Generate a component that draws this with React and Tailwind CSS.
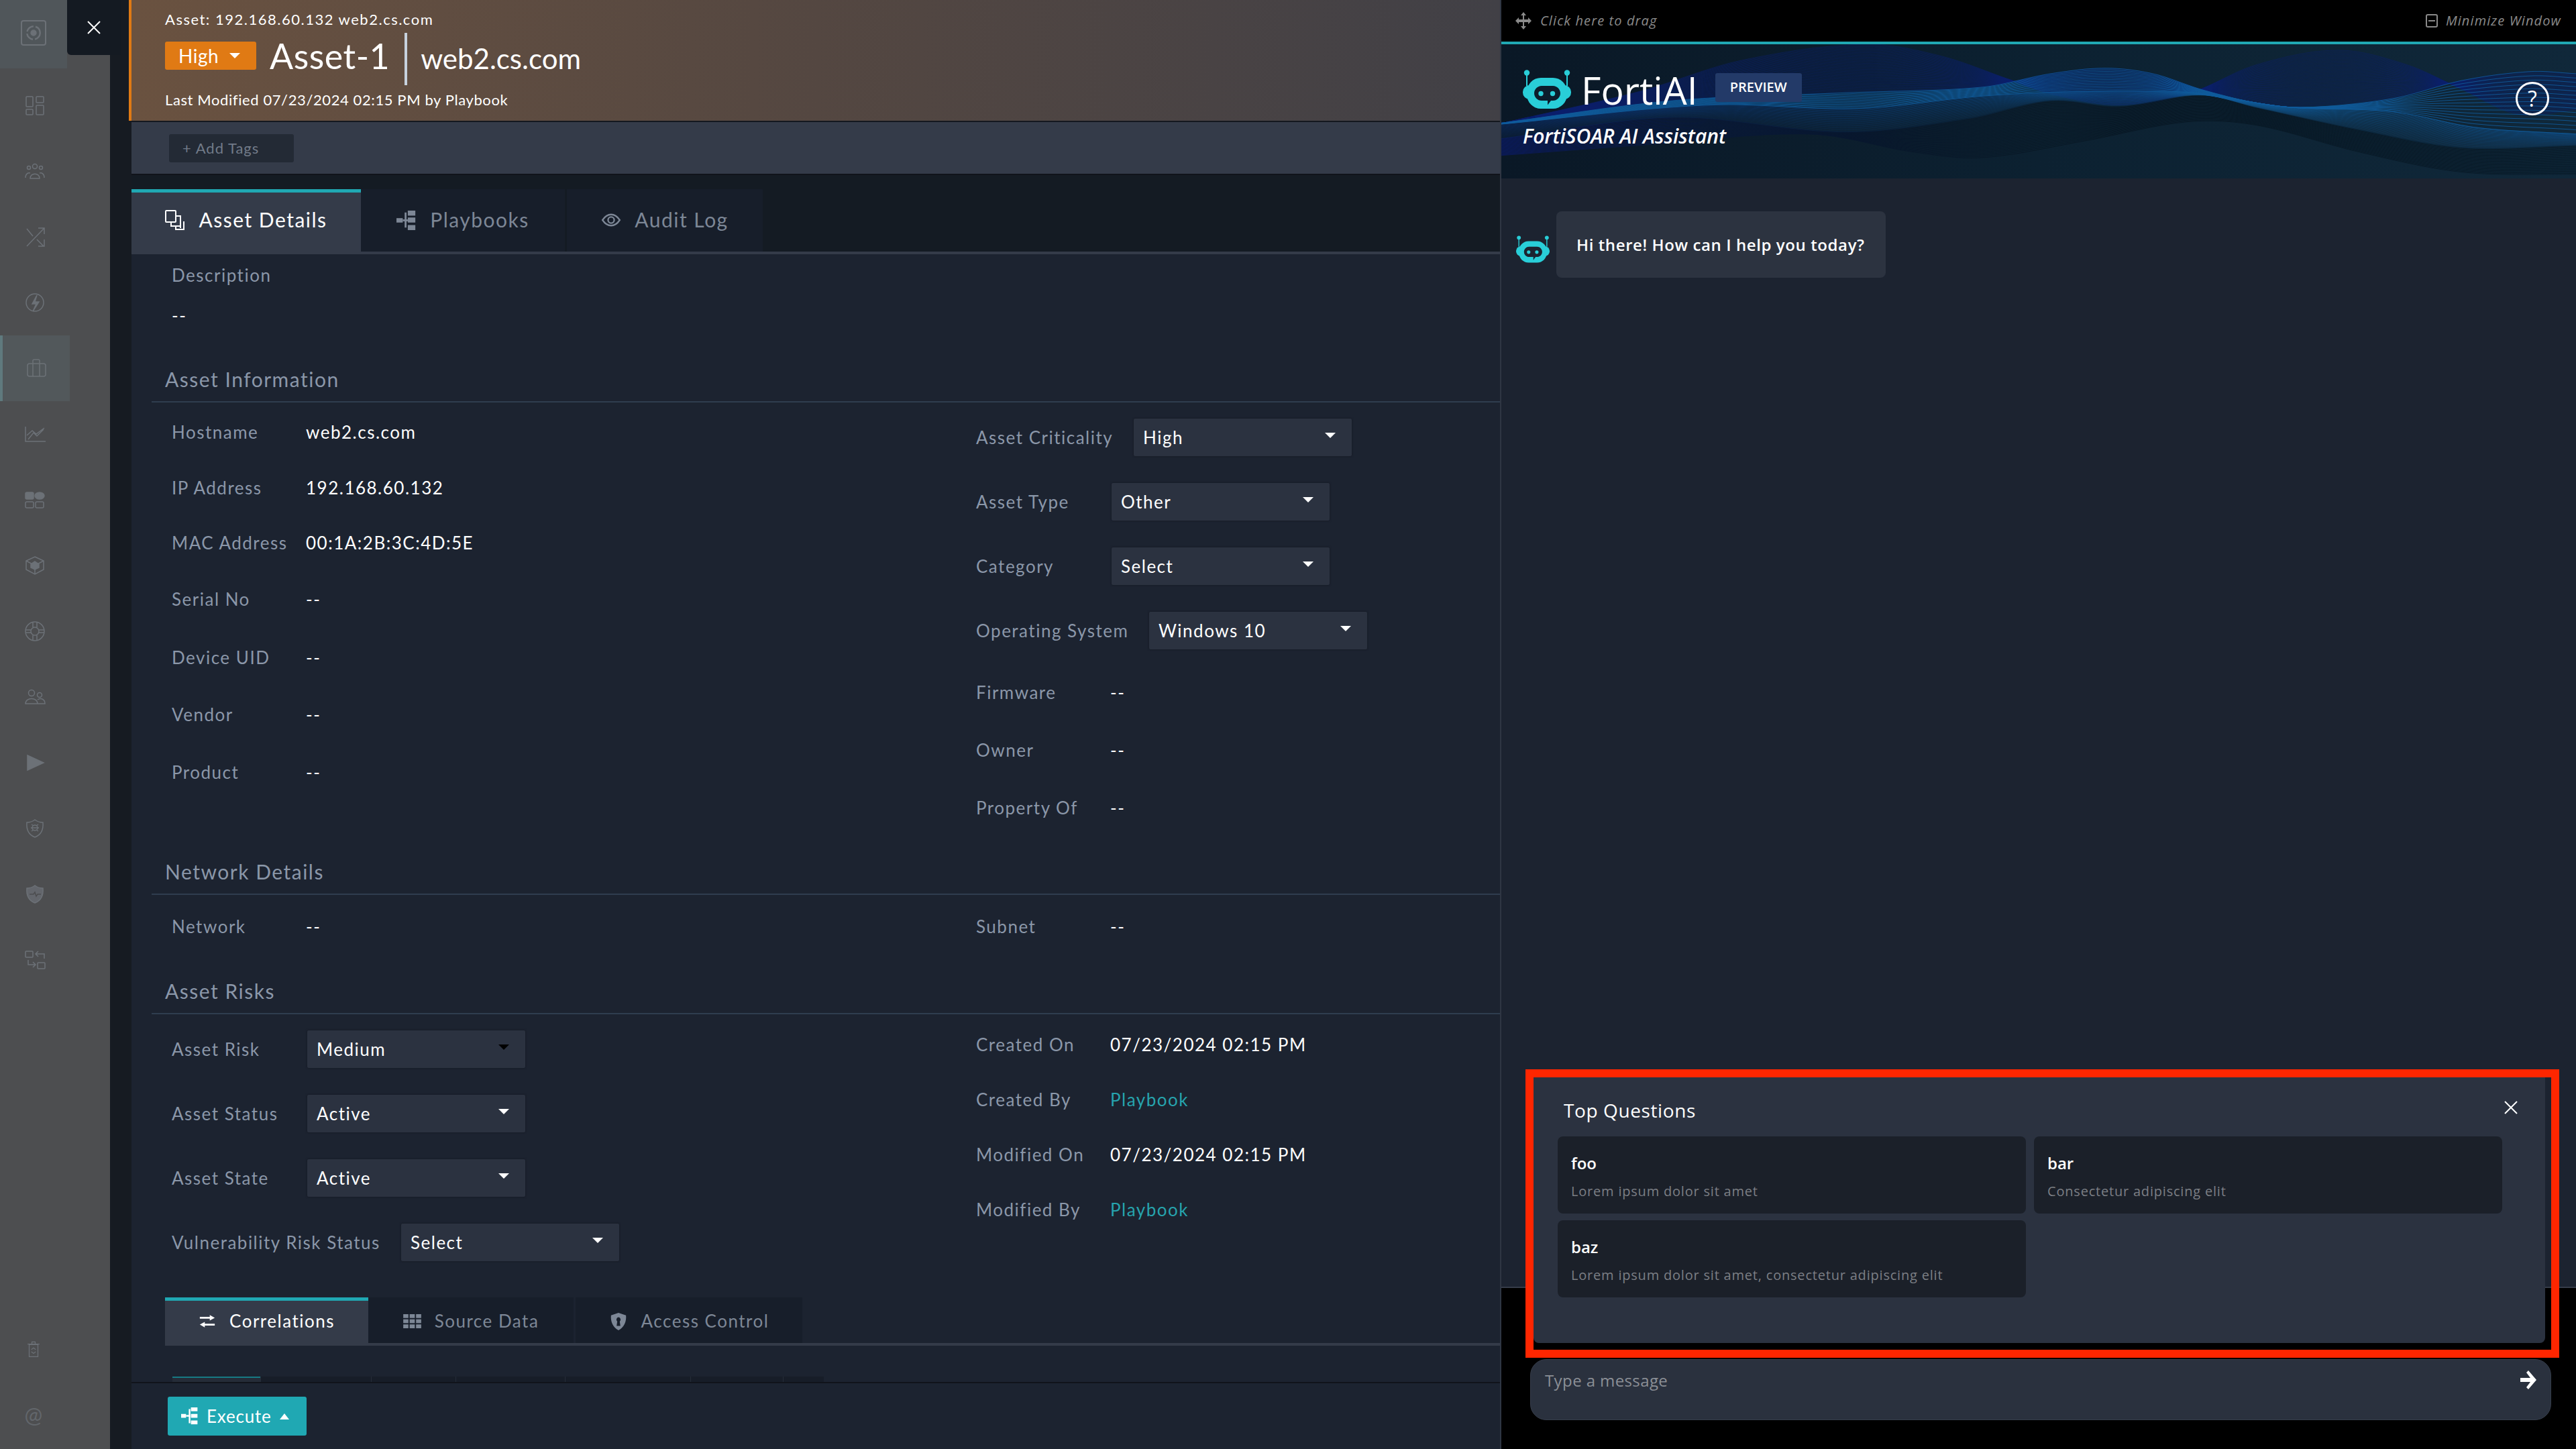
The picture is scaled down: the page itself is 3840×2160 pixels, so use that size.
import React from "react";

const I = ({ children, w = 32, h = 32, vb = "0 0 32 32", className = "", fill = "none", sw = 1.5 }) => (
  <svg width={w} height={h} viewBox={vb} fill={fill} stroke="currentColor" strokeWidth={sw} className={className}>{children}</svg>
);

const sideIcons = [
  <><rect x="3" y="3" width="10" height="15" rx="1"/><rect x="18" y="3" width="11" height="9" rx="1"/><rect x="3" y="22" width="10" height="8" rx="1"/><rect x="18" y="16" width="11" height="14" rx="1"/></>,
  <><circle cx="16" cy="9" r="3.5"/><circle cx="7" cy="11" r="2.5"/><circle cx="25" cy="11" r="2.5"/><path d="M9 27c0-9 14-9 14 0zM2 26c0-6 4-8 7-7M30 26c0-6-4-8-7-7"/></>,
  <><path d="M4 4l9 11M30 3L4 30M21 3h9v9M30 20v10h-9M19 20l10 10"/></>,
  <><circle cx="16" cy="16" r="13"/><path d="M19 5l-7 13h6l-5 11 9-14h-6z" fill="currentColor"/></>,
  <><rect x="3" y="9" width="27" height="19" rx="3"/><path d="M11 9V5a2 2 0 012-2h6a2 2 0 012 2v4M11 9v19M21 9v19"/></>,
  <><path d="M2 5v22h30M6 24l8-10 5 5 10-10M4 18l8-7 6 5 12-9"/></>,
  <><rect x="2" y="5" width="12" height="10" rx="2" fill="currentColor"/><ellipse cx="23" cy="10" rx="7" ry="5" fill="currentColor"/><rect x="2" y="19" width="12" height="9" rx="2"/><rect x="17" y="19" width="12" height="9" rx="2"/></>,
  <><path d="M16 3l13 6v13l-13 7-13-7V9z"/><path d="M3 9l13 7 13-7M16 16v13" /><path d="M16 10l6 4v5l-6 3-6-3v-5z" fill="currentColor"/></>,
  <><circle cx="16" cy="16" r="14"/><circle cx="16" cy="16" r="6"/><path d="M13 2v8M19 2v8M13 22v8M19 22v8M2 14h8M22 14h8M2 18h8M22 18h8"/></>,
  <><circle cx="11" cy="10" r="4.5"/><circle cx="23" cy="13" r="3.5"/><path d="M2 26c0-10 18-10 18 0zM20 20c5-3 11-1 11 6H20"/></>,
  <><path d="M5 5l24 11-24 11z" fill="currentColor"/></>,
  <><path d="M16 3c4 3 8 4 12 4 1 12-4 19-12 22C8 26 3 19 4 7c4 0 8-1 12-4z"/><circle cx="16" cy="15" r="4"/><path d="M10 15h12M11 10l3 2M21 10l-3 2M11 20l3-2M21 20l-3-2"/></>,
  <><path d="M16 3c4 3 8 4 12 4 1 12-4 19-12 22C8 26 3 19 4 7c4 0 8-1 12-4z" fill="currentColor" fillOpacity=".7"/><path d="M8 16h6l2-3 2 6 2-3h5" stroke="#4c4d4f"/></>,
  <><rect x="2" y="3" width="11" height="9" rx="1"/><rect x="20" y="20" width="11" height="9" rx="1"/><path d="M30 14V7H17M21 3l-4 4 4 4M6 16v7h11M13 19l4 4-4 4"/></>,
];

function Sidebar() {
  return (
    <div className="w-[164px] h-full shrink-0 bg-[#4d4e50] flex flex-col text-[#6c7177]">
      <div className="h-[102px] w-[100px] bg-[#50565a] flex items-center justify-center">
        <div className="w-[38px] h-[38px] border-2 border-[#6c7177] rounded-[4px] flex items-center justify-center mb-[4px]">
          <I w={26} h={26}><circle cx="16" cy="16" r="12" strokeWidth="3" strokeDasharray="16 4"/><circle cx="16" cy="16" r="5" fill="currentColor"/></I>
        </div>
      </div>
      <div className="flex flex-col w-[108px] mt-[6px]">
        {sideIcons.map((ic, i) => (
          <div key={i} className={i === 4 ? "h-[98px] w-[104px] flex items-center justify-center bg-[#52585b] border-l-4 border-[#5f7a7e]" : "h-[98px] w-[104px] flex items-center justify-center"}><I>{ic}</I></div>
        ))}
      </div>
      <div className="mt-auto w-[100px] flex flex-col items-center pb-[35px] gap-[66px]">
        <I w={26} h={32}><path d="M8 8h16v22H8zM5 7h22M13 7V3h6v4"/><path d="M12 17l4-3 4 3M12 21l4 3 4-3"/></I>
        <span className="text-[32px] leading-none font-['Lato'] text-[#62666b]">@</span>
      </div>
    </div>
  );
}

const Caret = ({ className = "border-t-white" }) => <span className={`inline-block w-0 h-0 border-x-[8px] border-x-transparent border-t-[8px] ${className}`} />;

const Sel = ({ v, dark }) => (
  <div className="w-[325px] h-[56px] bg-[#2b3240] rounded-[2px] flex items-center justify-between pl-[14px] pr-[24px] shadow-[0_0_3px_#12171f] shrink-0">
    <span className="text-white text-[26px] tracking-[1.5px]">{v}</span>
    <Caret className={dark ? "mb-[6px] border-t-black" : "mb-[6px] border-t-white"} />
  </div>
);

const Label = ({ children, className = "" }) => <span className={`text-[#8b97a9] text-[26px] tracking-[1.5px] ${className}`}>{children}</span>;
const Val = ({ children, className = "text-white" }) => <span className={`text-[26px] tracking-[1.5px] ${className}`}>{children}</span>;

const Row = ({ h, label, children, lw = "w-[200px]" }) => (
  <div className={`${h} flex items-center`}>
    <Label className={`${lw} shrink-0`}>{label}</Label>
    {children}
  </div>
);

const Heading = ({ children }) => (
  <div className="h-[84px] ml-[30px] pl-[20px] pt-[31px] border-b-2 border-[#2f3d4f] shrink-0">
    <div className="text-[#8b97a9] text-[30px] leading-[36px] tracking-[1.5px]">{children}</div>
  </div>
);

const Tab = ({ icon, label, active, w, big }) => (
  <div className={`${w} ${big ? "h-[93px] text-[30px] pb-[7px]" : "h-[68px] text-[26px] pb-[2px]"} flex items-center justify-center gap-[20px] border-t-[5px] tracking-[1.5px] ${active ? "bg-[#343b49] border-[#20a8b3] text-white" : "bg-[#171e2a] border-[#171e2a] text-[#7d8796] mr-[3px]"}`}>
    {icon}
    <span>{label}</span>
  </div>
);

const miniTabs = ["w-[165px]", "w-[126px]", "w-[163px]", "w-[187px]", "w-[138px]", "w-[61px]"];

function Left() {
  return (
    <div className="w-[2040px] h-full shrink-0 bg-[#1c2330] flex flex-col font-['Lato'] relative">
      <div className="h-[180px] shrink-0 -ml-[4px] border-l-[4px] border-[#e07a14] bg-gradient-to-r from-[#6a5240] via-[#544741] to-[#414046] pl-[50px] flex flex-col">
        <div className="text-white text-[22px] leading-[26px] mt-[16px] tracking-[1.5px]">Asset: 192.168.60.132 web2.cs.com</div>
        <div className="flex items-center h-[78px] mt-[7px]">
          <div className="w-[136px] h-[42px] mb-[10px] bg-[#e07a14] rounded-[3px] flex items-center pl-[20px] gap-[16px] text-white text-[28px] tracking-[0.5px]">High<Caret /></div>
          <div className="text-white text-[52px] ml-[20px] leading-none mb-[10px] tracking-[0.5px]">Asset-1</div>
          <div className="w-[4px] h-[78px] bg-[#c7d2de] ml-[22px]" />
          <div className="text-white text-[42px] ml-[20px] leading-none mb-[2px]">web2.cs.com</div>
        </div>
        <div className="text-white text-[22px] leading-[26px] mt-[9px] tracking-[0.6px]">Last Modified 07/23/2024 02:15 PM by Playbook</div>
      </div>
      <div className="h-[2px] bg-[#14181f] shrink-0" />
      <div className="h-[77px] shrink-0 bg-[#343b49] pl-[56px] flex items-center">
        <div className="w-[186px] h-[42px] bg-[#232a35] rounded-[3px] flex items-center pl-[20px] text-[#727b89] text-[22px] tracking-[1px]">+ Add Tags</div>
      </div>
      <div className="h-[23px] bg-[#141b23] shrink-0 border-t-2 border-[#10141b]" />
      <div className="flex shrink-0 border-b-4 border-[#343b49] bg-[#141b23]">
        <Tab big active w="w-[342px]" label="Asset Details" icon={<I w={30} h={30} vb="0 0 30 30" sw={2}><rect x="1" y="1" width="15" height="17" rx="1"/><path d="M16 9h7v18M9 18v6h14M28 17v12H16v-5"/></I>} />
        <Tab big w="w-[304px]" label="Playbooks" icon={<I w={30} h={32} sw={0} fill="currentColor"><rect x="0" y="13" width="10" height="7"/><rect x="18" y="1" width="12" height="8"/><rect x="18" y="12" width="12" height="8"/><rect x="18" y="24" width="12" height="8"/><rect x="13" y="4" width="3" height="24"/><rect x="10" y="15" width="8" height="3"/></I>} />
        <Tab big w="w-[292px]" label="Audit Log" icon={<I w={30} h={22} vb="0 0 30 24" sw={2.5}><path d="M1 12c8-12 20-12 28 0-8 12-20 12-28 0z"/><circle cx="15" cy="12" r="5"/></I>} />
      </div>
      <div className="h-[59px] pl-[60px] pt-[13px] shrink-0"><Label className="leading-[36px] block">Description</Label></div>
      <div className="h-[64px] pl-[60px] flex items-center shrink-0"><Val>--</Val></div>
      <div className="mt-[14px] shrink-0"><Heading>Asset Information</Heading></div>
      <div className="grid grid-cols-[1199px_1fr] pl-[60px] shrink-0 mt-[2px]">
        <div>
          <Row h="h-[84px]" label="Hostname"><Val>web2.cs.com</Val></Row>
          <Row h="h-[82px]" label="IP Address"><Val>192.168.60.132</Val></Row>
          <Row h="h-[82px]" label="MAC Address"><Val>00:1A:2B:3C:4D:5E</Val></Row>
          <Row h="h-[86px]" label="Serial No"><Val>--</Val></Row>
          <Row h="h-[88px]" label="Device UID"><Val>--</Val></Row>
          <Row h="h-[82px]" label="Vendor"><Val>--</Val></Row>
          <Row h="h-[90px]" label="Product"><Val>--</Val></Row>
        </div>
        <div>
          <Row h="h-[100px]" label="Asset Criticality" lw="w-[235px]"><Sel v="High" /></Row>
          <Row h="h-[92px]" label="Asset Type" lw="w-[202px]"><Sel v="Other" /></Row>
          <Row h="h-[100px]" label="Category" lw="w-[202px]"><Sel v="Select" /></Row>
          <Row h="h-[92px]" label="Operating System" lw="w-[258px]"><Sel v="Windows 10" /></Row>
          <Row h="h-[92px]" label="Firmware"><Val>--</Val></Row>
          <Row h="h-[80px]" label="Owner"><Val>--</Val></Row>
          <Row h="h-[92px]" label="Property Of"><Val>--</Val></Row>
        </div>
      </div>
      <Heading>Network Details</Heading>
      <div className="grid grid-cols-[1199px_1fr] pl-[60px] shrink-0">
        <Row h="h-[94px]" label="Network"><Val>--</Val></Row>
        <Row h="h-[94px]" label="Subnet"><Val>--</Val></Row>
      </div>
      <Heading>Asset Risks</Heading>
      <div className="grid grid-cols-[1199px_1fr] pl-[60px] shrink-0">
        <div>
          <Row h="h-[104px]" label="Asset Risk" lw="w-[202px]"><Sel v="Medium" dark /></Row>
          <Row h="h-[88px]" label="Asset Status" lw="w-[202px]"><Sel v="Active" /></Row>
          <Row h="h-[104px]" label="Asset State" lw="w-[202px]"><Sel v="Active" /></Row>
          <Row h="h-[88px]" label="Vulnerability Risk Status" lw="w-[342px]"><Sel v="Select" /></Row>
        </div>
        <div>
          <Row h="h-[90px]" label="Created On"><Val>07/23/2024 02:15 PM</Val></Row>
          <Row h="h-[74px]" label="Created By"><Val className="text-[#26a4ae]">Playbook</Val></Row>
          <Row h="h-[90px]" label="Modified On"><Val>07/23/2024 02:15 PM</Val></Row>
          <Row h="h-[74px]" label="Modified By"><Val className="text-[#26a4ae]">Playbook</Val></Row>
        </div>
      </div>
      <div className="ml-[50px] mt-[38px] flex border-b-4 border-[#343b49] shrink-0">
        <Tab active w="w-[303px]" label="Correlations" icon={<I w={26} h={19} vb="0 0 28 20" sw={0} fill="currentColor"><path d="M2 3h16V0l8 4.5L18 9V6H2zM26 14H10v-3l-8 4.5L10 20v-3h16z"/></I>} />
        <Tab w="w-[306px]" label="Source Data" icon={<I w={27} h={21} vb="0 0 28 22" sw={0} fill="currentColor"><rect x="0" y="0" width="8" height="6"/><rect x="10" y="0" width="8" height="6"/><rect x="20" y="0" width="8" height="6"/><rect x="0" y="8" width="8" height="6"/><rect x="10" y="8" width="8" height="6"/><rect x="20" y="8" width="8" height="6"/><rect x="0" y="16" width="8" height="6"/><rect x="10" y="16" width="8" height="6"/><rect x="20" y="16" width="8" height="6"/></I>} />
        <Tab w="w-[338px]" label="Access Control" icon={<I w={28} h={26} vb="0 0 26 28" sw={0} fill="currentColor"><path fillRule="evenodd" d="M13 0l12 4c1 10-3 19-12 24C4 23 0 14 1 4zM13 7a4 4 0 00-2 7l-1 7h6l-1-7a4 4 0 00-2-7z"/></I>} />
      </div>
      <div className="flex-1 min-h-0 flex items-end pl-[61px]">
        <div className="w-[971px] h-[8px] bg-[#141922] flex">
          <div className="w-[131px] h-full bg-[#252c38] border-t-2 border-[#167a84]" />
          {miniTabs.map((w, i) => <div key={i} className={`${w} h-full border-l border-[#252c38] bg-[#171d28]`} />)}
        </div>
      </div>
      <div className="h-[2px] bg-[#10141b] shrink-0" />
      <div className="h-[98px] shrink-0 bg-[#1c2330] pl-[54px] pt-[20px]">
        <div className="w-[207px] h-[58px] bg-[#20a8b3] rounded-[3px] flex items-center pl-[20px] gap-[12px] text-white text-[26px] tracking-[0.8px]">
          <I w={26} h={28} sw={0} fill="currentColor"><rect x="0" y="12" width="9" height="7"/><rect x="18" y="0" width="12" height="7"/><rect x="18" y="12" width="12" height="7"/><rect x="18" y="24" width="12" height="7"/><rect x="14" y="3" width="3" height="26"/><rect x="9" y="14" width="8" height="3"/></I>
          <span>Execute</span>
          <span className="w-0 h-0 border-x-[7px] border-x-transparent border-b-[9px] border-b-white" />
        </div>
      </div>
    </div>
  );
}

const Bot = ({ w, h, inner = "#0c1d2c" }) => (
  <svg width={w} height={h} viewBox="0 0 72 60" className="shrink-0">
    <path d="M6 4v20M66 4v20" stroke="#29ced8" strokeWidth="2" />
    <circle cx="6" cy="4.5" r="4.2" fill="#29ced8" /><circle cx="66" cy="4.5" r="4.2" fill="#29ced8" />
    <rect x="0" y="23" width="72" height="21" rx="10" fill="#29ced8" />
    <rect x="6" y="12" width="60" height="46" rx="21" fill="#29ced8" />
    <path d="M28 24h17c6 0 11 5 11 11s-5 11-11 11h-3l-5 6.5V46h-9c-6 0-11-5-11-11s5-11 11-11z" fill={inner} />
    <circle cx="27" cy="35.5" r="3.7" fill="#29ced8" /><circle cx="44.5" cy="35.5" r="3.7" fill="#29ced8" />
  </svg>
);

function curve(pts, t) {
  const n = pts.length - 1;
  let i = 0;
  while (i < n - 1 && t > pts[i + 1][0]) i++;
  const p0 = pts[Math.max(0, i - 1)], p1 = pts[i], p2 = pts[i + 1], p3 = pts[Math.min(n, i + 2)];
  const u = (t - p1[0]) / (p2[0] - p1[0]);
  const m1 = (p2[1] - p0[1]) / (p2[0] - p0[0]) * (p2[0] - p1[0]);
  const m2 = (p3[1] - p1[1]) / (p3[0] - p1[0]) * (p2[0] - p1[0]);
  const u2 = u * u, u3 = u2 * u;
  return (2 * u3 - 3 * u2 + 1) * p1[1] + (u3 - 2 * u2 + u) * m1 + (-2 * u3 + 3 * u2) * p2[1] + (u3 - u2) * m2;
}
const conv = (a) => a.map(([x, y]) => [x / 0.9776, y / 3 - 6]);
const cTop = conv([[0, 372], [200, 230], [350, 90], [530, 18], [640, 70], [740, 175], [800, 240], [900, 290], [1000, 240], [1100, 110], [1220, 45], [1320, 110], [1400, 220], [1480, 330], [1568, 310]]);
const rTop = conv([[0, 370], [250, 270], [500, 235], [700, 210], [800, 150], [880, 125], [950, 150], [1020, 220], [1100, 280], [1170, 300], [1300, 260], [1400, 180], [1500, 140], [1568, 150]]);
const rLow = conv([[0, 375], [300, 290], [520, 305], [700, 250], [850, 228], [1000, 232], [1060, 260], [1150, 300], [1300, 320], [1420, 390], [1568, 420]]);
const cMid = conv([[0, 440], [250, 345], [500, 410], [680, 350], [800, 270], [900, 295], [1020, 245], [1100, 300], [1250, 400], [1400, 480], [1568, 470]]);
const cLow = conv([[0, 515], [200, 470], [450, 420], [600, 500], [700, 525], [850, 450], [1000, 365], [1100, 380], [1250, 500], [1400, 590], [1568, 600]]);
function bundle(a, b, n) {
  const out = [];
  for (let k = 0; k <= n; k++) {
    const f = k / n;
    let d = "";
    for (let x = 0; x <= 1620; x += 10) {
      const y = curve(a, x) * (1 - f) + curve(b, x) * f;
      d += (x ? "L" : "M") + x + " " + y.toFixed(1);
    }
    out.push(d);
  }
  return out;
}
const navy = bundle(cTop, rTop, 40);
const bright = bundle(rTop, rLow, 14);
const blue = bundle(rLow, cMid, 24);
const dark = bundle(cMid, cLow, 30);

function Chat() {
  return (
    <div className="w-[1604px] h-full shrink-0 bg-black flex flex-col font-['Open_Sans'] relative border-l-2 border-[#2f3643]">
      <div className="h-[62px] shrink-0 flex items-center justify-between pl-[20px] pr-[22px] text-[#8a8a8a] text-[20px] italic tracking-[1.1px]">
        <div className="flex items-center gap-[12px]">
          <I w={26} h={26} vb="0 0 26 26" sw={0} fill="currentColor"><path d="M13 0l4 5h-3v6h6V8l5 5-5 5v-3h-6v6h3l-4 5-4-5h3v-6H6v3l-5-5 5-5v3h6V5H9z"/></I>
          <span>Click here to drag</span>
        </div>
        <div className="flex items-center gap-[12px]">
          <span className="w-[18px] h-[20px] border-2 border-[#8a8a8a] rounded-[3px] flex items-center justify-center"><span className="w-[10px] h-[2px] bg-[#8a8a8a]" /></span>
          <span>Minimize Window</span>
        </div>
      </div>
      <div className="h-[4px] bg-[#20a8b3] shrink-0" />
      <div className="h-[200px] shrink-0 relative overflow-hidden bg-gradient-to-r from-[#0a1826] via-[#0c2131] to-[#10283a]">
        <svg width="1604" height="200" className="absolute inset-0" fill="none">
          <defs>
            <linearGradient id="gb" gradientUnits="userSpaceOnUse" x1="0" x2="1604" y1="0" y2="0">
              <stop offset="0" stopColor="#0b2a60" />
              <stop offset="0.4" stopColor="#0c3f78" />
              <stop offset="0.65" stopColor="#0f5a98" />
              <stop offset="1" stopColor="#0e4c86" />
            </linearGradient>
            <linearGradient id="gd" gradientUnits="userSpaceOnUse" x1="0" x2="1604" y1="0" y2="0">
              <stop offset="0" stopColor="#0a1a60" />
              <stop offset="0.2" stopColor="#081838" />
              <stop offset="0.5" stopColor="#061420" />
              <stop offset="1" stopColor="#071a28" />
            </linearGradient>
          </defs>
          {navy.map((d, i) => <path key={i} d={d} stroke="#0b1f6e" strokeWidth="1" opacity="0.55" />)}
          {dark.map((d, i) => <path key={i} d={d} stroke="url(#gd)" strokeWidth="1" opacity="0.8" />)}
          {blue.map((d, i) => <path key={i} d={d} stroke="url(#gb)" strokeWidth="1" opacity={0.7 - i * 0.02} />)}
          {bright.map((d, i) => <path key={i} d={d} stroke="#0f5c9c" strokeWidth="1" opacity="0.85" />)}
        </svg>
        <div className="relative pl-[32px] pt-[38px]">
          <div className="flex items-center h-[60px]">
            <Bot w={72} h={60} />
            <span className="text-white text-[57px] leading-none ml-[15px] font-normal">FortiAI</span>
            <span className="w-[129px] h-[43px] ml-[26px] mb-[8px] bg-[#233a68] rounded-[3px] flex items-center justify-center text-white text-[20px] font-semibold">PREVIEW</span>
          </div>
          <div className="text-white italic font-semibold text-[30px] leading-[40px] mt-[19px]">FortiSOAR AI Assistant</div>
        </div>
        <div className="absolute left-[1512px] top-[56px] w-[50px] h-[50px] rounded-full border-[3px] border-white text-white text-[32px] flex items-center justify-center">?</div>
      </div>
      <div className="flex-1 bg-[#1c2330] border-b-2 border-[#363d4a] pt-[49px] pl-[22px] flex items-start gap-[10px]">
        <div className="mt-[36px]"><Bot w={50} h={42} inner="#1c2330" /></div>
        <div className="w-[491px] h-[99px] bg-[#2c3340] rounded-[8px] flex items-center pl-[30px] text-white text-[24px] font-semibold tracking-[0.6px]">Hi there! How can I help you today?</div>
      </div>
      <div className="h-[240px] shrink-0 pl-[43px] pt-[106px]">
        <div className="w-[1522px] h-[91px] bg-[#2a313e] rounded-[24px] pl-[21px] pr-[20px] pt-[15px] flex justify-between items-start border border-[#363d4a]">
          <span className="text-[#8b8f96] text-[24px] leading-[32px] tracking-[0.4px]">Type a message</span>
          <svg width="26" height="30" viewBox="0 0 26 30" fill="#fff"><path d="M13 1l12 14-12 14-3-3 6-8H1v-6h15l-6-8z"/></svg>
        </div>
      </div>
      <div className="absolute left-[48px] top-[1606px] w-[1508px] h-[396px] bg-[#2b3240] rounded-b-[8px]">
        <div className="flex items-start justify-between pl-[45px] pr-[40px] pt-[30px]">
          <span className="text-white text-[28px] leading-[38px] tracking-[0.6px]">Top Questions</span>
          <svg width="22" height="22" viewBox="0 0 22 22" stroke="#fff" strokeWidth="2" className="mt-[4px]"><path d="M2 2l18 18M20 2L2 20"/></svg>
        </div>
        <div className="grid grid-cols-[698px_698px] gap-x-[12px] gap-y-[10px] pl-[36px] mt-[20px]">
          {[["foo", "Lorem ipsum dolor sit amet"], ["bar", "Consectetur adipiscing elit"], ["baz", "Lorem ipsum dolor sit amet, consectetur adipiscing elit"]].map(([t, s]) => (
            <div key={t} className="h-[115px] bg-[#1b2029] rounded-[8px] pl-[20px] pt-[24px]">
              <div className="text-white text-[24px] font-semibold leading-[32px]">{t}</div>
              <div className="text-[#7c7f85] text-[20px] leading-[28px] mt-[12px] tracking-[0.8px]">{s}</div>
            </div>
          ))}
        </div>
      </div>
    </div>
  );
}

export default function App() {
  return (
    <div className="w-[3840px] h-[2160px] flex overflow-hidden relative bg-black">
      <Sidebar />
      <div className="w-[32px] h-full shrink-0 bg-[#161b22]" />
      <Left />
      <Chat />
      <div className="absolute left-[100px] top-0 w-[80px] h-[82px] bg-[#141a22] rounded-bl-[6px] flex items-center justify-center">
        <svg width="22" height="22" viewBox="0 0 22 22" stroke="#fff" strokeWidth="2"><path d="M2 2l18 18M20 2L2 20"/></svg>
      </div>
      <div className="absolute left-[2274px] top-[1594px] w-[1541px] h-[430px] border-[12px] border-[#ff2600]" />
    </div>
  );
}
